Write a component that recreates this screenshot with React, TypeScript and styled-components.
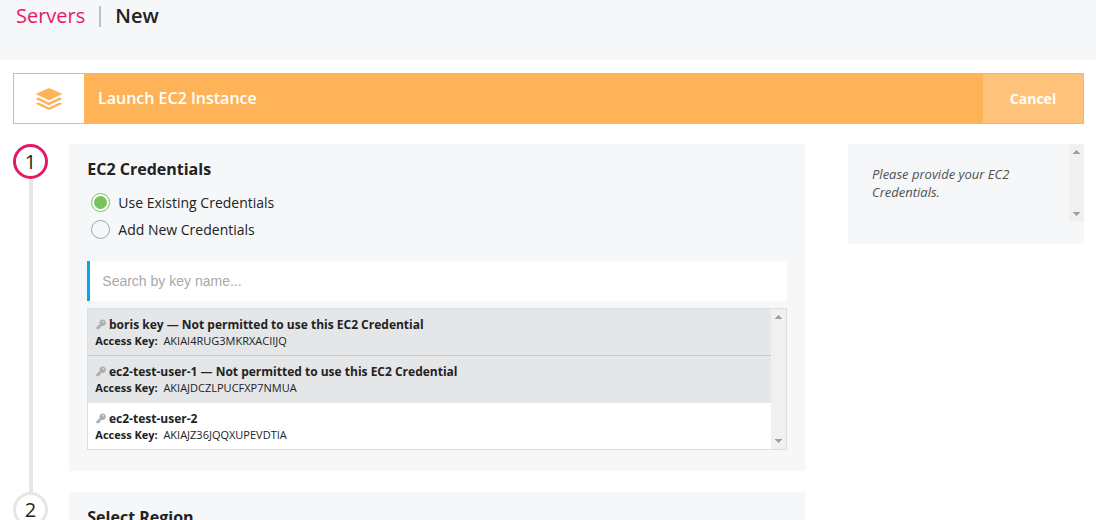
import React from "react";
import styled, { createGlobalStyle } from "styled-components";

const GlobalStyle = createGlobalStyle`
  *, *::before, *::after { box-sizing: border-box; }
  html, body { margin: 0; height: 520px; overflow: hidden; background: #fff; }
  body { font-family: "Open Sans", sans-serif; color: #222; }
  h1, h2, p, ul { margin: 0; padding: 0; }
`;

const Page = styled.div`
  width: 1096px;
  height: 520px;
  overflow: hidden;
`;

const Header = styled.header`
  display: flex;
  align-items: flex-start;
  height: 60px;
  padding: 2px 16px 0;
  background: #f5f7f9;
  font-size: 20px;
  line-height: 28px;
`;

const HeaderLink = styled.a`
  color: #e51868;
`;

const Divider = styled.span`
  width: 2px;
  height: 21px;
  margin: 4px 14px 0 14px;
  background: #bcbfc6;
`;

const HeaderTitle = styled.h1`
  font-size: inherit;
  font-weight: 600;
  line-height: inherit;
`;

const Banner = styled.section`
  display: flex;
  height: 51px;
  margin: 13px 12px 20px 13px;
  border: 1px solid #ffb359;
  background: #ffb359;
  color: #fff;
`;

const BannerIcon = styled.div`
  display: flex;
  align-items: center;
  justify-content: center;
  width: 70px;
  background: #fff;
`;

const BannerTitle = styled.h2`
  flex: 1;
  padding-left: 14px;
  font-size: 16px;
  font-weight: 600;
  line-height: 48px;
`;

const CancelButton = styled.button`
  width: 100px;
  padding: 0;
  border: 0;
  background: #ffc27b;
  color: #fff;
  font: 700 14px/49px "Open Sans", sans-serif;
`;

const Main = styled.main`
  display: flex;
  align-items: flex-start;
  padding: 0 12px 0 13px;
`;

const Steps = styled.div`
  width: 792px;
`;

const Step = styled.section`
  display: flex;
`;

const Rail = styled.div`
  display: flex;
  flex-direction: column;
  align-items: center;
  width: 35px;
  margin-right: 21px;
`;

const StepNumber = styled.div<{ $active?: boolean }>`
  width: 35px;
  height: 35px;
  flex: none;
  border: 3px solid ${(p) => (p.$active ? "#e51868" : "#e6e6e6")};
  border-radius: 50%;
  font-size: 20px;
  line-height: 29px;
  text-align: center;
`;

const RailLine = styled.div`
  flex: 1;
  width: 4px;
  margin-left: 1px;
  background: #e6e6e6;
`;

const Card = styled.div`
  width: 736px;
  height: 327px;
  margin-bottom: 21px;
  padding: 13px 18px;
  background: #f5f7f9;
`;

const CardTitle = styled.h2`
  padding-left: 0.3px;
  font-size: 16px;
  font-weight: 700;
  line-height: 24px;
`;

const Options = styled.div`
  padding: 8px 0 0 4.3px;
`;

const Option = styled.div`
  display: flex;
  align-items: center;
  height: 27px;
  font-size: 14px;
`;

const Radio = styled.span<{ $checked?: boolean }>`
  width: 19px;
  height: 19px;
  margin-right: 8px;
  padding: 2px;
  border: 1px solid ${(p) => (p.$checked ? "#78c061" : "#a3a4a8")};
  border-radius: 50%;
  background: ${(p) => (p.$checked ? "#fff" : "transparent")};

  &::before {
    content: "";
    display: ${(p) => (p.$checked ? "block" : "none")};
    width: 13px;
    height: 13px;
    border-radius: 50%;
    background: #78c061;
  }
`;

const Search = styled.input`
  display: block;
  width: 700px;
  height: 40px;
  margin: 18px 0 7px;
  padding: 0 12.3px;
  border: 0;
  border-left: 3px solid #00aae6;
  outline: 0;
  font: 14px "Liberation Sans", sans-serif;

  &::placeholder { color: #a9a9a9; opacity: 1; }
`;

const ListBox = styled.div`
  display: flex;
  height: 142px;
  border: 1px solid #dcdee0;
  background: #fff;
`;

const KeyList = styled.ul`
  flex: 1;
  list-style: none;
`;

const KeyRow = styled.li<{ $disabled?: boolean; $line?: boolean }>`
  height: 47px;
  padding: 7px 0 0 7px;
  border-bottom: 1px solid ${(p) => (p.$line ? "#cbcccf" : "transparent")};
  background: ${(p) => (p.$disabled ? "#e5e6e8" : "#fff")};

  &:last-child { height: 46px; border-bottom: 0; }
`;

const KeyName = styled.div`
  display: flex;
  align-items: center;
  gap: 3px;
  font-size: 12px;
  font-weight: 700;
  line-height: 18px;

  svg { margin-bottom: 2px; }
`;

const AccessKey = styled.div`
  display: flex;
  gap: 5.7px;
  margin-top: -1px;
  padding-left: 0.3px;
  font-size: 11px;
  line-height: 15px;
`;

const ScrollTrack = styled.div<{ $height: number }>`
  display: flex;
  flex-direction: column;
  align-items: center;
  justify-content: space-between;
  flex: none;
  width: 15px;
  height: ${(p) => p.$height}px;
  padding: 6px 0;
  background: #f0f0f0;
`;

const Aside = styled.aside`
  display: flex;
  justify-content: space-between;
  width: 236px;
  height: 100px;
  margin-left: 43px;
  background: #f5f7f9;
`;

const AsideText = styled.p`
  width: 160px;
  padding: 21px 0 0;
  margin-left: 24px;
  color: #505050;
  font-size: 13px;
  font-style: italic;
  line-height: 18px;
`;

const Scrollbar = ({ height }: { height: number }) => (
  <ScrollTrack $height={height}>
    <svg width="7" height="4" viewBox="0 0 7 4" fill="#a0a0a0" shapeRendering="crispEdges">
      <path d="M3 0h1v1h1v1h1v1h1v1H0V3h1V2h1V1h1z" />
    </svg>
    <svg width="7" height="4" viewBox="0 0 7 4" fill="#a0a0a0" shapeRendering="crispEdges">
      <path d="M0 0h7v1H6v1H5v1H4v1H3V3H2V2H1V1H0z" />
    </svg>
  </ScrollTrack>
);

const LayersIcon = () => (
  <svg width="28" height="24" viewBox="0 0 28 24" fill="#ffb359">
    <path d="M14 1 27.400 7 14 13.200.6 7z" />
    <path d="M.6 11.900 3.600 10.600 14 15.600l10.400-5 3 1.300L14 18.200z" />
    <path d="M.6 16.700 3.600 15.400 14 20.400l10.400-5 3 1.300L14 23z" />
  </svg>
);

const KeyIcon = () => (
  <svg width="11" height="11" viewBox="0 0 11 11" fill="#adafb2">
    <path
      fillRule="evenodd"
      d="M7.400.5a3.300 3.300 0 1 1-1.200 6.300L5.300 7.700l.7.7-1 1-.7-.7-.4.4.5.6-.9.9-.6-.6-.6.6L.7 9l4-4A3.300 3.300 0 0 1 7.400.5zM8.200 2.100a.7.7 0 1 0 0 1.400.7.7 0 0 0 0-1.400z"
    />
  </svg>
);

const keys = [
  { name: "boris key — Not permitted to use this EC2 Credential", id: "AKIAI4RUG3MKRXACIIJQ", disabled: true, line: true },
  { name: "ec2-test-user-1 — Not permitted to use this EC2 Credential", id: "AKIAJDCZLPUCFXP7NMUA", disabled: true },
  { name: "ec2-test-user-2", id: "AKIAJZ36JQQXUPEVDTIA" },
];

export default function App() {
  return (
    <Page>
      <GlobalStyle />
      <Header>
        <HeaderLink>Servers</HeaderLink>
        <Divider />
        <HeaderTitle>New</HeaderTitle>
      </Header>
      <Banner>
        <BannerIcon><LayersIcon /></BannerIcon>
        <BannerTitle>Launch EC2 Instance</BannerTitle>
        <CancelButton>Cancel</CancelButton>
      </Banner>
      <Main>
        <Steps>
          <Step>
            <Rail>
              <StepNumber $active>1</StepNumber>
              <RailLine />
            </Rail>
            <Card>
              <CardTitle>EC2 Credentials</CardTitle>
              <Options>
                <Option><Radio $checked />Use Existing Credentials</Option>
                <Option><Radio />Add New Credentials</Option>
              </Options>
              <Search placeholder="Search by key name..." />
              <ListBox>
                <KeyList>
                  {keys.map((k) => (
                    <KeyRow key={k.id} $disabled={k.disabled} $line={k.line}>
                      <KeyName><KeyIcon />{k.name}</KeyName>
                      <AccessKey><b>Access Key:</b><span>{k.id}</span></AccessKey>
                    </KeyRow>
                  ))}
                </KeyList>
                <Scrollbar height={140} />
              </ListBox>
            </Card>
          </Step>
          <Step>
            <Rail><StepNumber>2</StepNumber></Rail>
            <Card><CardTitle>Select Region</CardTitle></Card>
          </Step>
        </Steps>
        <Aside>
          <AsideText>Please provide your EC2 Credentials.</AsideText>
          <Scrollbar height={78} />
        </Aside>
      </Main>
    </Page>
  );
}
